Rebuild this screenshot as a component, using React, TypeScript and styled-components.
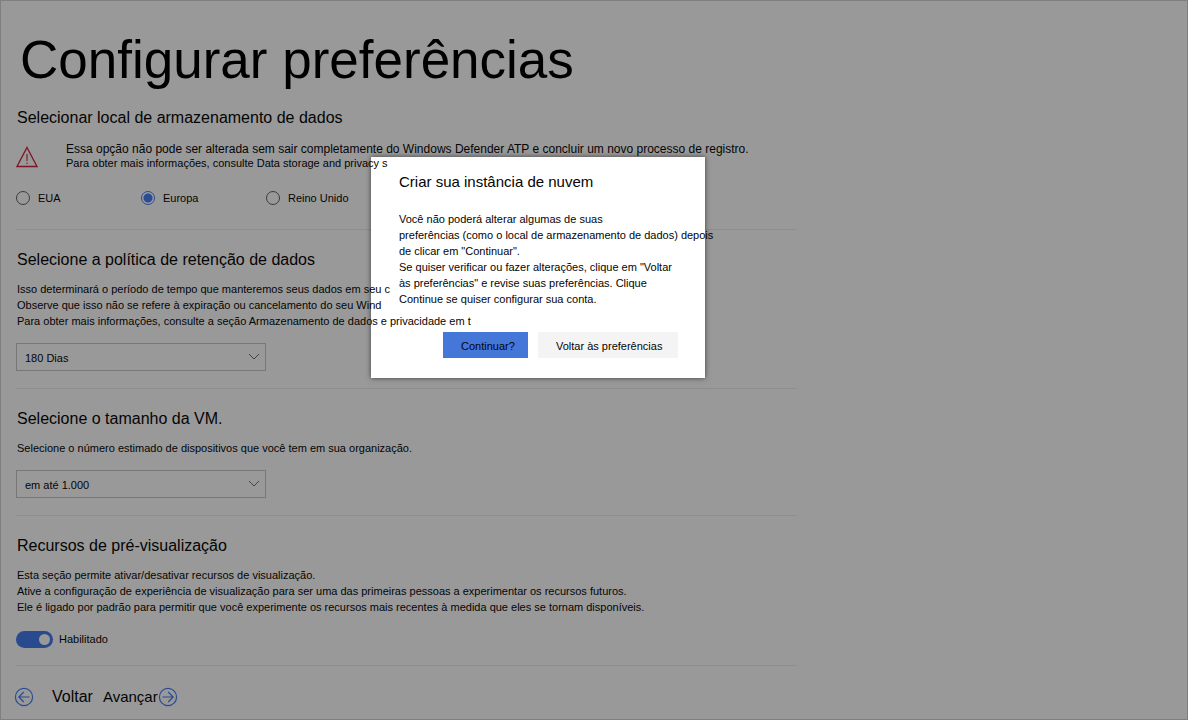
import React from "react";
import styled, { createGlobalStyle } from "styled-components";

const GlobalStyle = createGlobalStyle`
  *, *::before, *::after { box-sizing: border-box; }
  body { margin: 0; background: #999; }
  body, button, input, select {
    font-family: "Liberation Sans", Arial, sans-serif;
    color: #050505;
  }
`;

const Page = styled.main`
  position: relative;
  min-height: 100vh;
  padding: 29px 15px 8px;
  border: 1px solid #7f7f7f;
  background: #999;
`;

const Title = styled.h1`
  margin: 0 0 18px;
  padding-left: 4px;
  font-size: 53px;
  line-height: 60px;
  font-weight: 400;
  color: #000;
`;

const Section = styled.section`
  max-width: 781px;
  padding: 20px 0 17px;
  border-bottom: 1px solid #8e8e8e;
`;

const FirstSection = styled(Section)`
  padding: 0 0 23px;
`;

const Heading = styled.h2`
  margin: 0 0 11px;
  padding-left: 1px;
  font-size: 16px;
  line-height: 20px;
  font-weight: 400;
`;

const Copy = styled.p`
  position: relative;
  z-index: 2;
  margin: 0;
  padding-left: 1px;
  font-size: 11px;
  line-height: 16px;
  white-space: nowrap;
  pointer-events: none;
`;

const WarningCopy = styled(Copy)`
  padding: 0;
  line-height: 14px;
`;

const WarningLead = styled.span`
  font-size: 12px;
`;

const Warning = styled.div`
  display: flex;
  gap: 28px;
  margin-top: 14px;
  svg { flex: none; margin-top: 4px; }
`;

const Radios = styled.div`
  display: grid;
  grid-template-columns: repeat(3, 125px);
  margin-top: 20px;
`;

const RadioLabel = styled.label`
  display: flex;
  align-items: center;
  gap: 8px;
  font-size: 11px;
  line-height: 16px;
`;

const Radio = styled.input`
  appearance: none;
  width: 14px;
  height: 14px;
  margin: 0;
  border: 1px solid #3c3c3c;
  border-radius: 50%;
  &:checked {
    border-color: #2b4c94;
    background: radial-gradient(circle, #2b4c94 4px, transparent 5px);
  }
`;

const SelectBox = styled.div`
  position: relative;
  width: 250px;
  margin-top: 14px;
  svg { position: absolute; right: 6px; top: 9px; pointer-events: none; }
`;

const Select = styled.select`
  display: block;
  appearance: none;
  width: 100%;
  height: 28px;
  padding: 2px 24px 0 8px;
  border: 1px solid #777;
  border-radius: 0;
  background: transparent;
  font-size: 11px;
`;

const SwitchLabel = styled.label`
  display: flex;
  align-items: center;
  gap: 6px;
  margin-top: 16px;
  font-size: 11px;
  line-height: 17px;
`;

const Switch = styled.input`
  appearance: none;
  display: flex;
  align-items: center;
  justify-content: flex-start;
  width: 37px;
  height: 17px;
  margin: 0;
  padding: 0 3px;
  border-radius: 9px;
  background: #666;
  &::before {
    content: "";
    width: 11px;
    height: 11px;
    border-radius: 50%;
    background: #999;
  }
  &:checked { background: #294a8f; justify-content: flex-end; }
`;

const Nav = styled.nav`
  display: flex;
  align-items: center;
  gap: 10px;
  margin: 21px 0 0 -2px;
`;

const NavButton = styled.button<{ $size: number; $gap: number }>`
  display: flex;
  align-items: center;
  gap: ${(p) => p.$gap}px;
  padding: 0;
  border: 0;
  background: none;
  font-size: ${(p) => p.$size}px;
  line-height: 20px;
`;

const Dialog = styled.div`
  position: absolute;
  z-index: 1;
  top: 156px;
  left: 370px;
  width: 334px;
  padding: 15px 27px 20px;
  background: #fff;
  box-shadow: 0 0 5px rgba(0, 0, 0, 0.6);
`;

const DialogTitle = styled(Heading)`
  margin-bottom: 19px;
  font-size: 15px;
`;

const Actions = styled.div`
  display: flex;
  justify-content: flex-end;
  gap: 10px;
  margin-top: 25px;
`;

const Action = styled.button<{ $primary?: boolean }>`
  min-width: ${(p) => (p.$primary ? 85 : 140)}px;
  height: 26px;
  padding: 2px 13px 0 18px;
  border: 0;
  background: ${(p) => (p.$primary ? "#4577d9" : "#f4f4f4")};
  font-size: 11px;
  text-align: left;
  white-space: nowrap;
`;

const Chevron = () => (
  <svg width="12" height="9" viewBox="0 0 12 9" fill="none" stroke="#444" aria-hidden="true">
    <path d="M1 2l5 5 5-5" />
  </svg>
);

const Arrow = ({ back }: { back?: boolean }) => (
  <svg width="20" height="20" viewBox="0 0 20 20" fill="none" stroke="#2b4c94" strokeWidth="1.2" aria-hidden="true">
    <circle cx="10" cy="10" r="8.6" />
    {back ? <path d="M15.5 10H5M9.8 5L4.8 10l5 5" /> : <path d="M4.5 10H15M10.2 5l5 5-5 5" />}
  </svg>
);

export default function App() {
  return (
    <>
      <GlobalStyle />
      <Page>
        <Title>Configurar preferências</Title>
        <FirstSection>
          <Heading>Selecionar local de armazenamento de dados</Heading>
          <Warning>
            <svg width="22" height="22" viewBox="0 0 22 22" fill="none" aria-hidden="true">
              <path d="M11 1.5L21 20.5H1Z" stroke="#7c1626" strokeWidth="1.3" />
              <path d="M11 8v7M11 16.5v1.5" stroke="#7c3a26" strokeWidth="1.4" />
            </svg>
            <WarningCopy>
              <WarningLead>
                Essa opção não pode ser alterada sem sair completamente do Windows Defender ATP e concluir um novo processo de registro.
              </WarningLead>
              <br />
              Para obter mais informações, consulte Data storage and privacy s
            </WarningCopy>
          </Warning>
          <Radios role="radiogroup" aria-label="Local de armazenamento">
            <RadioLabel><Radio type="radio" name="local" />EUA</RadioLabel>
            <RadioLabel><Radio type="radio" name="local" defaultChecked />Europa</RadioLabel>
            <RadioLabel><Radio type="radio" name="local" />Reino Unido</RadioLabel>
          </Radios>
        </FirstSection>
        <Section>
          <Heading>Selecione a política de retenção de dados</Heading>
          <Copy>
            Isso determinará o período de tempo que manteremos seus dados em seu c
            <br />
            Observe que isso não se refere à expiração ou cancelamento do seu Wind
            <br />
            Para obter mais informações, consulte a seção Armazenamento de dados e privacidade em t
          </Copy>
          <SelectBox>
            <Select aria-label="Política de retenção de dados"><option>180 Dias</option></Select>
            <Chevron />
          </SelectBox>
        </Section>
        <Section>
          <Heading>Selecione o tamanho da VM.</Heading>
          <Copy>Selecione o número estimado de dispositivos que você tem em sua organização.</Copy>
          <SelectBox>
            <Select aria-label="Tamanho da VM"><option>em até 1.000</option></Select>
            <Chevron />
          </SelectBox>
        </Section>
        <Section>
          <Heading>Recursos de pré-visualização</Heading>
          <Copy>
            Esta seção permite ativar/desativar recursos de visualização.
            <br />
            Ative a configuração de experiência de visualização para ser uma das primeiras pessoas a experimentar os recursos futuros.
            <br />
            Ele é ligado por padrão para permitir que você experimente os recursos mais recentes à medida que eles se tornam disponíveis.
          </Copy>
          <SwitchLabel><Switch type="checkbox" role="switch" defaultChecked />Habilitado</SwitchLabel>
        </Section>
        <Nav>
          <NavButton type="button" $size={16} $gap={18}><Arrow back />Voltar</NavButton>
          <NavButton type="button" $size={15} $gap={0}>Avançar<Arrow /></NavButton>
        </Nav>
        <Dialog role="dialog" aria-labelledby="dialog-title">
          <DialogTitle id="dialog-title">Criar sua instância de nuvem</DialogTitle>
          <Copy>
            Você não poderá alterar algumas de suas
            <br />
            preferências (como o local de armazenamento de dados) depois
            <br />
            de clicar em "Continuar".
            <br />
            Se quiser verificar ou fazer alterações, clique em "Voltar
            <br />
            às preferências" e revise suas preferências. Clique
            <br />
            Continue se quiser configurar sua conta.
          </Copy>
          <Actions>
            <Action type="button" $primary>Continuar?</Action>
            <Action type="button">Voltar às preferências</Action>
          </Actions>
        </Dialog>
      </Page>
    </>
  );
}
